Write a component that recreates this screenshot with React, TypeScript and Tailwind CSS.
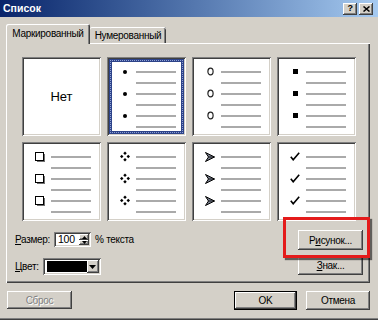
import React from "react";

const raised =
  "shadow-[inset_-1px_-1px_0_#404040,inset_1px_1px_0_#ffffff,inset_-2px_-2px_0_#808080,inset_2px_2px_0_#d4d0c8]";
const sunken =
  "shadow-[inset_1px_1px_0_#808080,inset_-1px_-1px_0_#ffffff,inset_2px_2px_0_#404040,inset_-2px_-2px_0_#d4d0c8]";

const Dot = () => <div className="w-[4px] h-[4px] rounded-full bg-black" />;
const Ring = () => (
  <svg width="7" height="9" viewBox="0 0 7 9">
    <ellipse cx="3.5" cy="4.5" rx="2.6" ry="3.4" fill="none" stroke="#222" strokeWidth="1.2" />
  </svg>
);
const Square = () => <div className="w-[5px] h-[5px] bg-black" />;
const HollowSquare = () => (
  <svg width="10" height="10" viewBox="0 0 10 10">
    <rect x="2" y="2" width="8" height="8" fill="#707070" />
    <rect x="0.5" y="0.5" width="8" height="8" fill="#fff" stroke="#000" strokeWidth="1" />
  </svg>
);
const Diamonds = () => (
  <svg width="11" height="11" viewBox="0 0 11 11">
    <path d="M5.5 0 L7.4 1.9 L5.5 3.8 L3.6 1.9 Z" fill="#000" />
    <path d="M5.5 7.2 L7.4 9.1 L5.5 11 L3.6 9.1 Z" fill="#000" />
    <path d="M1.9 3.6 L3.8 5.5 L1.9 7.4 L0 5.5 Z" fill="#000" />
    <path d="M9.1 3.6 L11 5.5 L9.1 7.4 L7.2 5.5 Z" fill="#000" />
  </svg>
);
const Arrow = () => (
  <svg width="10" height="10" viewBox="0 0 10 10">
    <path d="M0.5 0.5 L9.5 5 L0.5 9.5 L3.5 5 Z" fill="#7a8090" stroke="#000" strokeWidth="1" strokeLinejoin="miter" />
    <path d="M3.5 5 L9.5 5" stroke="#000" strokeWidth="0.8" />
  </svg>
);
const Check = () => (
  <svg width="10" height="9" viewBox="0 0 10 9">
    <path d="M0.8 4.8 L3.2 7.8 L9.2 0.8" fill="none" stroke="#000" strokeWidth="1.6" />
  </svg>
);

function Cell({
  bullet,
  selected,
  children,
}: {
  bullet?: React.ReactNode;
  selected?: boolean;
  children?: React.ReactNode;
}) {
  return (
    <div className={`relative w-[79px] h-[79px] bg-white ${sunken}`}>
      {children ? (
        <div className="w-full h-full flex items-center justify-center text-[13px] tracking-normal text-black">
          {children}
        </div>
      ) : (
        <div className="pt-[9px] pl-[2px] flex flex-col">
          {[0, 1, 2, 3, 4, 5].map((i) => (
            <div key={i} className="h-[11px] flex items-center">
              <div className="w-[27px] flex">
                <div className="ml-[11px] w-[10px] flex justify-center items-center">
                  {i % 2 === 0 ? bullet : null}
                </div>
              </div>
              <div className="w-[40px] h-[2px] bg-[#aaaaaa]" />
            </div>
          ))}
        </div>
      )}
      {selected && (
        <div className="absolute inset-[2px] border-[3px] border-[#2d4389] pointer-events-none">
          <div className="absolute -inset-[2px] border border-dotted border-[#8fa1d6]" />
        </div>
      )}
    </div>
  );
}

function Btn({
  w,
  h,
  children,
  disabled,
  def,
  className = "",
}: {
  w: string;
  h: string;
  children: React.ReactNode;
  disabled?: boolean;
  def?: boolean;
  className?: string;
}) {
  return (
    <div className={`${w} ${h} ${className} ${def ? "border border-black" : ""} bg-[#d4d0c8]`}>
      <div className={`w-full h-full flex items-center justify-center ${raised}`}>
        <span
          className={
            disabled
              ? "text-[#808080] [text-shadow:1px_1px_0_#ffffff]"
              : "text-black"
          }
        >
          {children}
        </span>
      </div>
    </div>
  );
}

export default function App() {
  return (
    <div className="relative w-[378px] h-[320px] bg-[#d4d0c8] overflow-hidden font-['Liberation_Sans',Arial,sans-serif] text-[10px] tracking-[-0.3px] text-black flex flex-col shadow-[inset_0_-1px_0_#404040,inset_0_-2px_0_#808080]">
      {/* Title bar */}
      <div className="h-[17px] shrink-0 flex items-center bg-gradient-to-r from-[#0a246a] to-[#a6caf0] pl-[3px] pr-[5px]">
        <span className="text-white font-bold text-[10.5px] tracking-normal leading-none">Список</span>
        <div className="ml-auto flex gap-[2px]">
          <div className={`w-[14px] h-[12px] bg-[#d4d0c8] flex items-center justify-center ${raised}`}>
            <span className="font-bold text-[9px] leading-none text-black">?</span>
          </div>
          <div className={`w-[14px] h-[12px] bg-[#d4d0c8] flex items-center justify-center ${raised}`}>
            <svg width="7" height="6" viewBox="0 0 7 6">
              <path d="M0.5 0.5 L6.5 5.5 M6.5 0.5 L0.5 5.5" stroke="#000" strokeWidth="1.5" />
            </svg>
          </div>
        </div>
      </div>

      {/* Tabs */}
      <div className="mt-[7px] ml-[6px] h-[19px] flex items-end relative z-10">
        <div className="w-[84px] h-[20px] -mb-[1px] bg-[#d4d0c8] rounded-t-[2px] shadow-[inset_1px_1px_0_#ffffff,inset_-1px_0_0_#404040,inset_-2px_0_0_#808080] flex items-center justify-center pb-[1px]">
          Маркированный
        </div>
        <div className="w-[76px] h-[16px] bg-[#d4d0c8] rounded-t-[2px] shadow-[inset_0_1px_0_#ffffff,inset_-1px_0_0_#404040,inset_-2px_0_0_#808080] flex items-center justify-center">
          Нумерованный
        </div>
      </div>

      {/* Panel */}
      <div className="ml-[6px] w-[364px] h-[240px] shrink-0 shadow-[inset_1px_1px_0_#ffffff,inset_-1px_-1px_0_#404040,inset_-2px_-2px_0_#808080] flex flex-col">
        <div className="mt-[14px] ml-[16px] grid grid-cols-[repeat(4,79px)] gap-[6px]">
          <Cell>Нет</Cell>
          <Cell bullet={<Dot />} selected />
          <Cell bullet={<Ring />} />
          <Cell bullet={<Square />} />
          <Cell bullet={<HollowSquare />} />
          <Cell bullet={<Diamonds />} />
          <Cell bullet={<Arrow />} />
          <Cell bullet={<Check />} />
        </div>

        <div className="mt-[9px] flex">
          <div className="ml-[9px] flex flex-col">
            <div className="mt-[2px] h-[15px] flex items-center">
              <span>
                <span className="underline">Р</span>азмер:
              </span>
              <div className={`ml-[4px] w-[37px] h-[15px] bg-white flex ${sunken}`}>
                <span className="pl-[4px] pt-[1px] leading-[13px] text-[10.5px]">100</span>
                <div className="ml-auto mr-[2px] mt-[2px] w-[10px] flex flex-col">
                  <div className={`h-[6px] bg-[#d4d0c8] flex items-center justify-center ${raised}`}>
                    <svg width="5" height="3" viewBox="0 0 5 3"><path d="M2.5 0 L5 3 L0 3 Z" fill="#000" /></svg>
                  </div>
                  <div className={`h-[5px] bg-[#d4d0c8] flex items-center justify-center ${raised}`}>
                    <svg width="5" height="3" viewBox="0 0 5 3"><path d="M0 0 L5 0 L2.5 3 Z" fill="#000" /></svg>
                  </div>
                </div>
              </div>
              <span className="ml-[4px]">% текста</span>
            </div>
            <div className="mt-[11px] h-[17px] flex items-center">
              <span>
                <span className="underline">Ц</span>вет:
              </span>
              <div className={`ml-[4px] w-[58px] h-[17px] bg-white flex items-center p-[2px] ${sunken}`}>
                <div className="ml-[2px] w-[40px] h-[11px] bg-black" />
                <div className={`ml-auto w-[12px] h-[13px] bg-[#d4d0c8] flex items-center justify-center ${raised}`}>
                  <svg width="7" height="4" viewBox="0 0 7 4"><path d="M0 0 L7 0 L3.5 4 Z" fill="#000" /></svg>
                </div>
              </div>
            </div>
          </div>

          <div className="ml-auto mr-[7px] flex flex-col">
            <Btn w="w-[65px]" h="h-[20px]">
              Р<span className="underline">и</span>сунок...
            </Btn>
            <Btn w="w-[65px]" h="h-[19px]" className="mt-[6px]">
              <span className="underline">З</span>нак...
            </Btn>
          </div>
        </div>
      </div>

      {/* Bottom buttons */}
      <div className="mt-[8px] flex">
        <Btn w="w-[65px]" h="h-[18px]" disabled className="ml-[7px]">
          Сброс
        </Btn>
        <Btn w="w-[63px]" h="h-[19px]" def className="ml-auto">
          OK
        </Btn>
        <Btn w="w-[64px]" h="h-[19px]" className="ml-[9px] mr-[8px]">
          Отмена
        </Btn>
      </div>

      {/* Red highlight annotation */}
      <div className="absolute left-[283px] top-[217px] w-[87px] h-[41px] border-[3px] border-[#e41b1b] shadow-[2px_2px_1px_rgba(0,0,0,0.55)] pointer-events-none" />
    </div>
  );
}
